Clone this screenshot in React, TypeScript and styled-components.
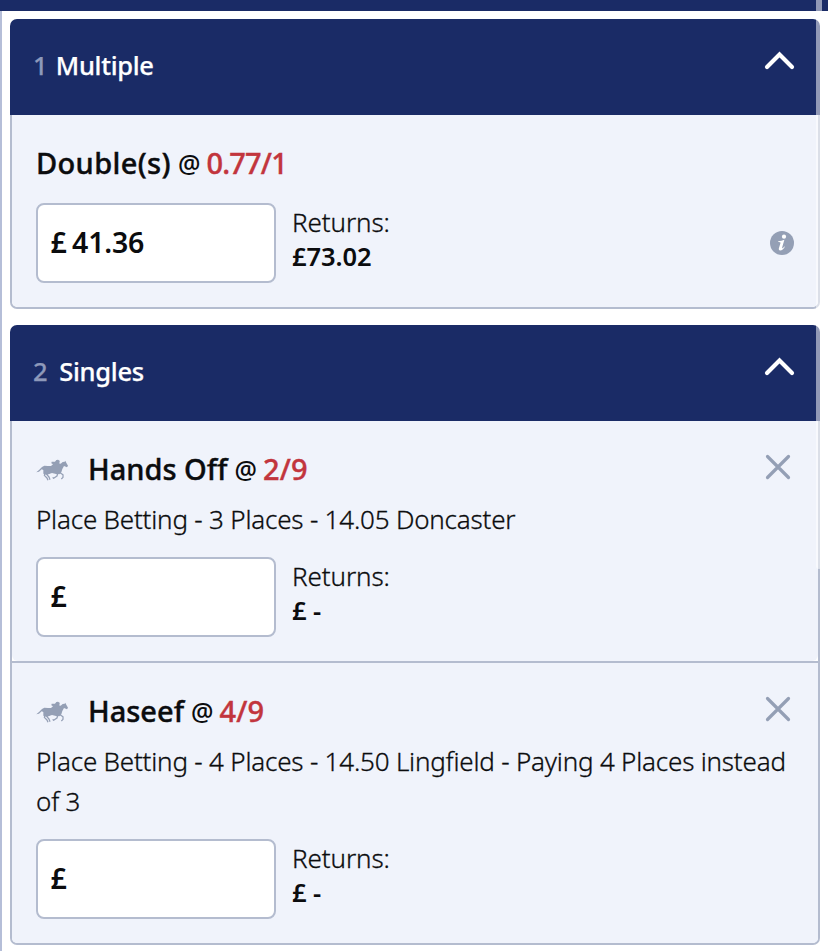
import React from "react";
import styled, { createGlobalStyle } from "styled-components";

const navy = "#1a2b66";
const line = "#b4bccf";
const muted = "#949fb5";

const GlobalStyle = createGlobalStyle`
  * { box-sizing: border-box; }
  body { margin: 0; background: #fff; overflow: hidden; }
`;

const Page = styled.div`
  position: relative;
  height: 951px;
  overflow: hidden;
  display: flex;
  flex-direction: column;
  font-family: "Noto Sans", "Open Sans", sans-serif;
  color: #0b0c0e;
`;

const TopBar = styled.div`
  flex: none;
  height: 11px;
  background: ${navy};
`;

const Slip = styled.main`
  flex: 1;
  display: flex;
  flex-direction: column;
  gap: 16px;
  padding: 8px 8px 0;
  border-left: 2px solid #b5bed8;
`;

const ScrollThumb = styled.div`
  position: absolute;
  top: 0;
  right: 6px;
  width: 6px;
  height: 569px;
  border-radius: 0 0 3px 3px;
  background: rgba(255, 255, 255, 0.52);
`;

const Panel = styled.section`
  border-radius: 7px;
`;

const PanelHeader = styled.header`
  height: 96px;
  padding: 0 25px 4px 23px;
  display: flex;
  align-items: center;
  background: ${navy};
  color: #fff;
  border-radius: 7px 7px 0 0;
  font-size: 25.5px;
  font-weight: 500;
  line-height: 36px;
  letter-spacing: -0.3px;
  -webkit-text-stroke: 0.25px currentColor;

  svg {
    margin: -10px 0 0 auto;
  }
`;

const Count = styled.span<{ $gap: number }>`
  color: #8e99ba;
  margin-right: ${(p) => p.$gap}px;
`;

const PanelBody = styled.div`
  border: 2px solid ${line};
  border-top: 0;
  border-radius: 0 0 7px 7px;
  background: #fff;
  overflow: hidden;
`;

const Bet = styled.article`
  padding: 24px;
  background: #f0f3fb;
  border-radius: 0 0 6px 6px;

  & + & {
    border-top: 2px solid ${line};
    border-radius: 0;
  }
`;

const BetHead = styled.div`
  display: flex;
  align-items: center;
  height: 48px;
`;

const Name = styled.h2<{ $tracking?: number }>`
  margin: -1px 0 0;
  font-size: 29px;
  font-weight: 500;
  line-height: 48px;
  letter-spacing: ${(p) => p.$tracking ?? 0}px;
  -webkit-text-stroke: 0.4px currentColor;
`;

const At = styled.span`
  margin: 0 6px 0 7px;
  font-size: 25px;
  font-weight: 500;
  line-height: 48px;
`;

const Odds = styled.span<{ $tracking?: number }>`
  margin-top: -1px;
  color: #c2353d;
  font-size: 29px;
  font-weight: 500;
  line-height: 48px;
  letter-spacing: ${(p) => p.$tracking ?? 0}px;
  -webkit-text-stroke: 0.4px currentColor;
`;

const HorseSvg = styled.svg`
  flex: none;
  margin: 2px 20px 0 0;
`;

const RemoveButton = styled.button`
  display: flex;
  margin: -4px 3px 0 auto;
  padding: 0;
  border: 0;
  background: none;
`;

const Description = styled.p`
  margin: 6px -6px 18px 0;
  font-size: 26px;
  font-weight: 300;
  line-height: 40px;
  letter-spacing: -0.2px;
  -webkit-text-stroke: 0.3px currentColor;
`;

const StakeRow = styled.div<{ $top?: number }>`
  display: flex;
  align-items: center;
  margin-top: ${(p) => p.$top ?? 0}px;
`;

const StakeBox = styled.div`
  width: 240px;
  height: 80px;
  padding: 0 12.5px 2px;
  display: flex;
  align-items: center;
  gap: 5.5px;
  border: 2px solid ${line};
  border-radius: 8px;
  background: #fff;
  font-size: 28.5px;
  font-weight: 600;
  letter-spacing: -0.2px;
`;

const Returns = styled.div`
  margin: -9px 0 0 16px;
  font-size: 26px;
  font-weight: 300;
  line-height: 34px;
  letter-spacing: -0.1px;
  -webkit-text-stroke: 0.3px currentColor;

  strong {
    display: block;
    font-size: 25.5px;
    font-weight: 600;
    -webkit-text-stroke: 0;
  }
`;

const InfoBadge = styled.svg`
  margin-left: auto;
`;

function Chevron() {
  return (
    <svg width="31" height="20" viewBox="0 0 31 20" fill="none">
      <path d="M3 17 15.5 4.5 28 17" stroke="#fff" strokeWidth="4.2" strokeLinecap="round" />
    </svg>
  );
}

function Horse() {
  return (
    <HorseSvg width="32" height="22" viewBox="36 44 96 66">
      <path
        fill={muted}
        d="M37 84 45 77 54 68 61 64 72 65 81 65 87 60 82 57 83 52 93 52 97 47 102 46 107 49 107 54 105 57 110 58 116 53 122 52 124 49 126 54 132 64 129 69 120 65 115 74 112 84 106 90 96 89 84 86 75 89 66 91 58 88 58 77 53 75 45 82Z"
      />
      <path
        d="M108 85 117 91 117 99 112 104M101 86 99 95 89 102 86 99M77 85 68 90 75 98 78 106M63 86 61 93 69 101 72 108"
        fill="none"
        stroke={muted}
        strokeWidth="3.8"
        strokeLinejoin="round"
      />
    </HorseSvg>
  );
}

function Remove() {
  return (
    <RemoveButton aria-label="Remove">
      <svg width="26" height="26" viewBox="0 0 26 26" fill="none">
        <path d="M2.5 2.5 23.5 23.5M23.5 2.5 2.5 23.5" stroke={muted} strokeWidth="3.2" strokeLinecap="round" />
      </svg>
    </RemoveButton>
  );
}

function Info() {
  return (
    <InfoBadge width="24" height="24" viewBox="0 0 24 24">
      <circle cx="12" cy="12" r="12" fill={muted} />
      <circle cx="14" cy="5.7" r="2.1" fill="#fff" />
      <path
        fill="#fff"
        d="M8.3 10.2Q11.5 9.9 14.4 8.8L12.2 16.2Q11.9 17.5 12.5 17.3 13.2 17 14.2 15.4L14.9 15.8Q12.9 19.5 10.2 19.5 8.4 19.4 8.8 17.5L10.5 12Q10.9 10.9 8.2 11Z"
      />
    </InfoBadge>
  );
}

function Single({ name, odds, text }: { name: string; odds: string; text: string }) {
  return (
    <Bet>
      <BetHead>
        <Horse />
        <Name>{name}</Name>
        <At>@</At>
        <Odds $tracking={0.1}>{odds}</Odds>
        <Remove />
      </BetHead>
      <Description>{text}</Description>
      <StakeRow>
        <StakeBox>£</StakeBox>
        <Returns>
          Returns:<strong>£ -</strong>
        </Returns>
      </StakeRow>
    </Bet>
  );
}

export default function App() {
  return (
    <Page>
      <GlobalStyle />
      <TopBar />
      <Slip>
        <Panel>
          <PanelHeader>
            <Count $gap={8.5}>1</Count>Multiple
            <Chevron />
          </PanelHeader>
          <PanelBody>
            <Bet>
              <BetHead>
                <Name $tracking={0.35}>Double(s)</Name>
                <At>@</At>
                <Odds $tracking={-0.8}>0.77/1</Odds>
              </BetHead>
              <StakeRow $top={16}>
                <StakeBox>
                  <span>£</span>
                  <span>41.36</span>
                </StakeBox>
                <Returns>
                  Returns:<strong>£73.02</strong>
                </Returns>
                <Info />
              </StakeRow>
            </Bet>
          </PanelBody>
        </Panel>
        <Panel>
          <PanelHeader>
            <Count $gap={12}>2</Count>Singles
            <Chevron />
          </PanelHeader>
          <PanelBody>
            <Single name="Hands Off" odds="2/9" text="Place Betting - 3 Places - 14.05 Doncaster" />
            <Single name="Haseef" odds="4/9" text="Place Betting - 4 Places - 14.50 Lingfield - Paying 4 Places instead of 3" />
          </PanelBody>
        </Panel>
      </Slip>
      <ScrollThumb />
    </Page>
  );
}
